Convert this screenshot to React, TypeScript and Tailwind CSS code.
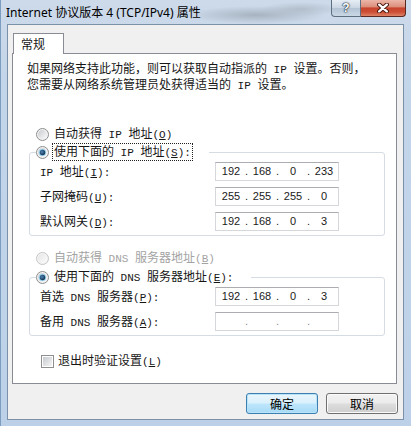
import React, { useId } from 'react';

// Latin runs are drawn in narrow half-width cells; "&X" marks an access key
function Txt({ s }: { s: string }) {
  const parts = s.split(/([\x20-\x7e]+)/);
  return (
    <>
      {parts.map((p, i) => {
        if (!p) return null;
        if (/^[\x20-\x7e]+$/.test(p)) {
          const bits = p.split(/&(.)/);
          return (
            <span key={i} className="font-['Liberation_Mono',monospace] text-[11px] whitespace-pre">
              {bits.map((b, j) => (j % 2 ? <u key={j}>{b}</u> : b))}
            </span>
          );
        }
        return <span key={i}>{p}</span>;
      })}
    </>
  );
}

const Radio = ({ checked, disabled }: { checked?: boolean; disabled?: boolean }) => {
  const id = useId();
  return (
    <svg width="13" height="13" viewBox="0 0 13 13" className="shrink-0">
      <defs>
        <linearGradient id={`${id}f`} x1="0" y1="0" x2="1" y2="1">
          <stop offset="0" stopColor={disabled ? '#e6e6e6' : '#c8cbcf'} />
          <stop offset="1" stopColor="#fbfbfb" />
        </linearGradient>
        <radialGradient id={`${id}d`} cx="0.4" cy="0.4" r="0.6">
          <stop offset="0" stopColor="#4f86b8" />
          <stop offset="1" stopColor="#173550" />
        </radialGradient>
      </defs>
      <circle cx="6.5" cy="6.5" r="6" fill="#f4f4f4" stroke={disabled ? '#c4c4c4' : '#8b8c8e'} />
      <circle cx="6.5" cy="6.5" r="4.5" fill={`url(#${id}f)`} />
      {checked && (
        <>
          <circle cx="6.5" cy="6.5" r="3.6" fill="#8fd0f0" />
          <circle cx="6.5" cy="6.5" r="2.7" fill={`url(#${id}d)`} />
        </>
      )}
    </svg>
  );
};

const Check = () => {
  const id = useId();
  return (
    <svg width="13" height="13" viewBox="0 0 13 13" className="shrink-0">
      <defs>
        <linearGradient id={`${id}g`} x1="0" y1="0" x2="1" y2="1">
          <stop offset="0" stopColor="#c6cacf" />
          <stop offset="1" stopColor="#f5f5f5" />
        </linearGradient>
      </defs>
      <rect x="0.5" y="0.5" width="12" height="12" fill="#fff" stroke="#8e8f8f" />
      <rect x="2" y="2" width="9" height="9" fill={`url(#${id}g)`} />
    </svg>
  );
};

const IpBox = ({ v }: { v?: string[] }) => (
  <div className="w-[124px] h-[19px] shrink-0 bg-white border border-[#d5d7db] border-t-[#abadb3] flex items-center pl-[3px] font-['Liberation_Sans',sans-serif] text-[11px] text-[#1a1a1a]">
    {[0, 1, 2, 3].map((i) => (
      <React.Fragment key={i}>
        {i > 0 && <span className={`w-[7px] text-center ${v ? '' : 'text-[#8a8a8a]'}`}>.</span>}
        <span className="w-[24px] text-center">{v ? v[i] : ''}</span>
      </React.Fragment>
    ))}
  </div>
);

const Row = ({ label, v }: { label: string; v?: string[] }) => (
  <div className="flex items-center h-[19px]">
    <div className="w-[175px] whitespace-nowrap">
      <Txt s={label} />
    </div>
    <IpBox v={v} />
  </div>
);

const Group = ({ legend, children }: { legend: React.ReactNode; children: React.ReactNode }) => (
  <fieldset className="ml-[16px] w-[356px] border border-[#d5dce3] rounded-[3px]">
    <legend className="ml-[6px] pr-[16px] h-[16px]">{legend}</legend>
    <div className="pt-[2px] pb-[4px] pl-[10px] flex flex-col gap-[6px]">{children}</div>
  </fieldset>
);

const RadioLine = ({ label, checked, disabled, focus }: { label: string; checked?: boolean; disabled?: boolean; focus?: boolean }) => (
  <div className={`flex items-center h-[16px] gap-[3px] whitespace-nowrap ${disabled ? 'text-[#a3a3a3]' : ''}`}>
    <Radio checked={checked} disabled={disabled} />
    <span className={`px-[1px] leading-[14px] border border-dotted ${focus ? 'border-[#222]' : 'border-transparent'}`}>
      <Txt s={label} />
    </span>
  </div>
);

export default function App() {
  return (
    <div className="w-[411px] h-[426px] flex flex-col border-l border-[#7c9cc0] bg-[radial-gradient(ellipse_70px_9px_at_255px_15px,#a7b3c0,transparent),radial-gradient(ellipse_40px_7px_at_300px_9px,#b3bfcc,transparent),linear-gradient(180deg,#cddaea,#c3d5e9_20%,#bcd1e8)] overflow-hidden">
      {/* caption */}
      <div className="h-[24px] shrink-0 flex items-start justify-between">
        <div className="h-[24px] flex items-center pl-[5px] pt-[2px] font-['Noto_Sans','Noto_Sans_CJK_SC',sans-serif] text-[12px] text-black whitespace-nowrap">
          Internet 协议版本 4 (TCP/IPv4) 属性
        </div>
        <div className="flex h-[17px] mr-[5px]">
          <div className="w-[30px] h-full border border-t-0 border-[#5f6f82] rounded-bl-[4px] bg-[linear-gradient(180deg,#e6edf4,#cbd7e4_48%,#b4c4d5_52%,#cad7e5)] flex items-center justify-center">
            <span className="font-['Liberation_Sans',sans-serif] font-bold text-[12px] leading-none text-white [text-shadow:0_0_1px_#1e2a38,0_0_1px_#1e2a38,0_0_2px_#1e2a38]">?</span>
          </div>
          <div className="w-[45px] h-full border border-t-0 border-l-0 border-[#5a2820] rounded-br-[4px] bg-[linear-gradient(180deg,#ecb6a8,#dc8f7c_42%,#c8442c_50%,#cc4e35_75%,#de8468)] flex items-center justify-center">
            <svg width="12" height="10" viewBox="0 0 12 10">
              <path d="M2.2 1.6 L9.8 8.4 M9.8 1.6 L2.2 8.4" stroke="#4b1810" strokeWidth="4.2" strokeLinecap="round" />
              <path d="M2.2 1.6 L9.8 8.4 M9.8 1.6 L2.2 8.4" stroke="#fff" strokeWidth="2.3" strokeLinecap="round" />
            </svg>
          </div>
        </div>
      </div>

      {/* client area */}
      <div className="ml-[6px] w-[397px] h-[396px] shrink-0 border border-[#7b91aa] bg-[#f0f0f0] flex flex-col font-['Noto_Sans_CJK_SC',sans-serif] text-[12px] text-[#161616]">
        <div className="pt-[8px] pl-[5px]">
          <div className="relative z-10 w-[51px] h-[21px] border border-b-0 border-[#898c95] bg-white pl-[7px] flex items-center">
            <Txt s="常规" />
          </div>
        </div>
        <div className="-mt-[1px] ml-[4px] w-[385px] h-[331px] border border-[#898c95] bg-white flex flex-col">
          <div className="pt-[7px] pl-[14px] leading-[14px] whitespace-nowrap">
            <div><Txt s="如果网络支持此功能，则可以获取自动指派的 IP 设置。否则，" /></div>
            <div><Txt s="您需要从网络系统管理员处获得适当的 IP 设置。" /></div>
          </div>

          <div className="mt-[33px] ml-[23px]">
            <RadioLine label="自动获得 IP 地址(&O)" />
          </div>
          <div className="mt-[2px]">
            <Group legend={<RadioLine label="使用下面的 IP 地址(&S):" checked focus />}>
              <Row label="IP 地址(&I):" v={['192', '168', '0', '233']} />
              <Row label="子网掩码(&U):" v={['255', '255', '255', '0']} />
              <Row label="默认网关(&D):" v={['192', '168', '0', '3']} />
            </Group>
          </div>

          <div className="mt-[14px] ml-[23px]">
            <RadioLine label="自动获得 DNS 服务器地址(&B)" disabled />
          </div>
          <div className="mt-[3px]">
            <Group legend={<RadioLine label="使用下面的 DNS 服务器地址(&E):" checked />}>
              <Row label="首选 DNS 服务器(&P):" v={['192', '168', '0', '3']} />
              <Row label="备用 DNS 服务器(&A):" />
            </Group>
          </div>

          <div className="mt-[17px] ml-[28px] h-[16px] flex items-center gap-[3px] whitespace-nowrap">
            <Check />
            <span className="pl-[1px]"><Txt s="退出时验证设置(&L)" /></span>
          </div>
        </div>

        <div className="mt-[9px] mr-[5px] flex justify-end gap-[8px]">
          <button className="w-[72px] h-[21px] rounded-[3px] border border-[#3c7fb1] bg-[linear-gradient(180deg,#eaf6fd,#d9f0fc_48%,#bee6fd_52%,#a7d9f5)] shadow-[inset_0_0_0_1px_#b9e3f9] text-[12px] text-black">
            确定
          </button>
          <button className="w-[72px] h-[21px] rounded-[3px] border border-[#707070] bg-[linear-gradient(180deg,#f2f2f2,#ebebeb_48%,#dddddd_52%,#cfcfcf)] shadow-[inset_0_0_0_1px_#fafafa] text-[12px] text-black">
            取消
          </button>
        </div>
      </div>
    </div>
  );
}
